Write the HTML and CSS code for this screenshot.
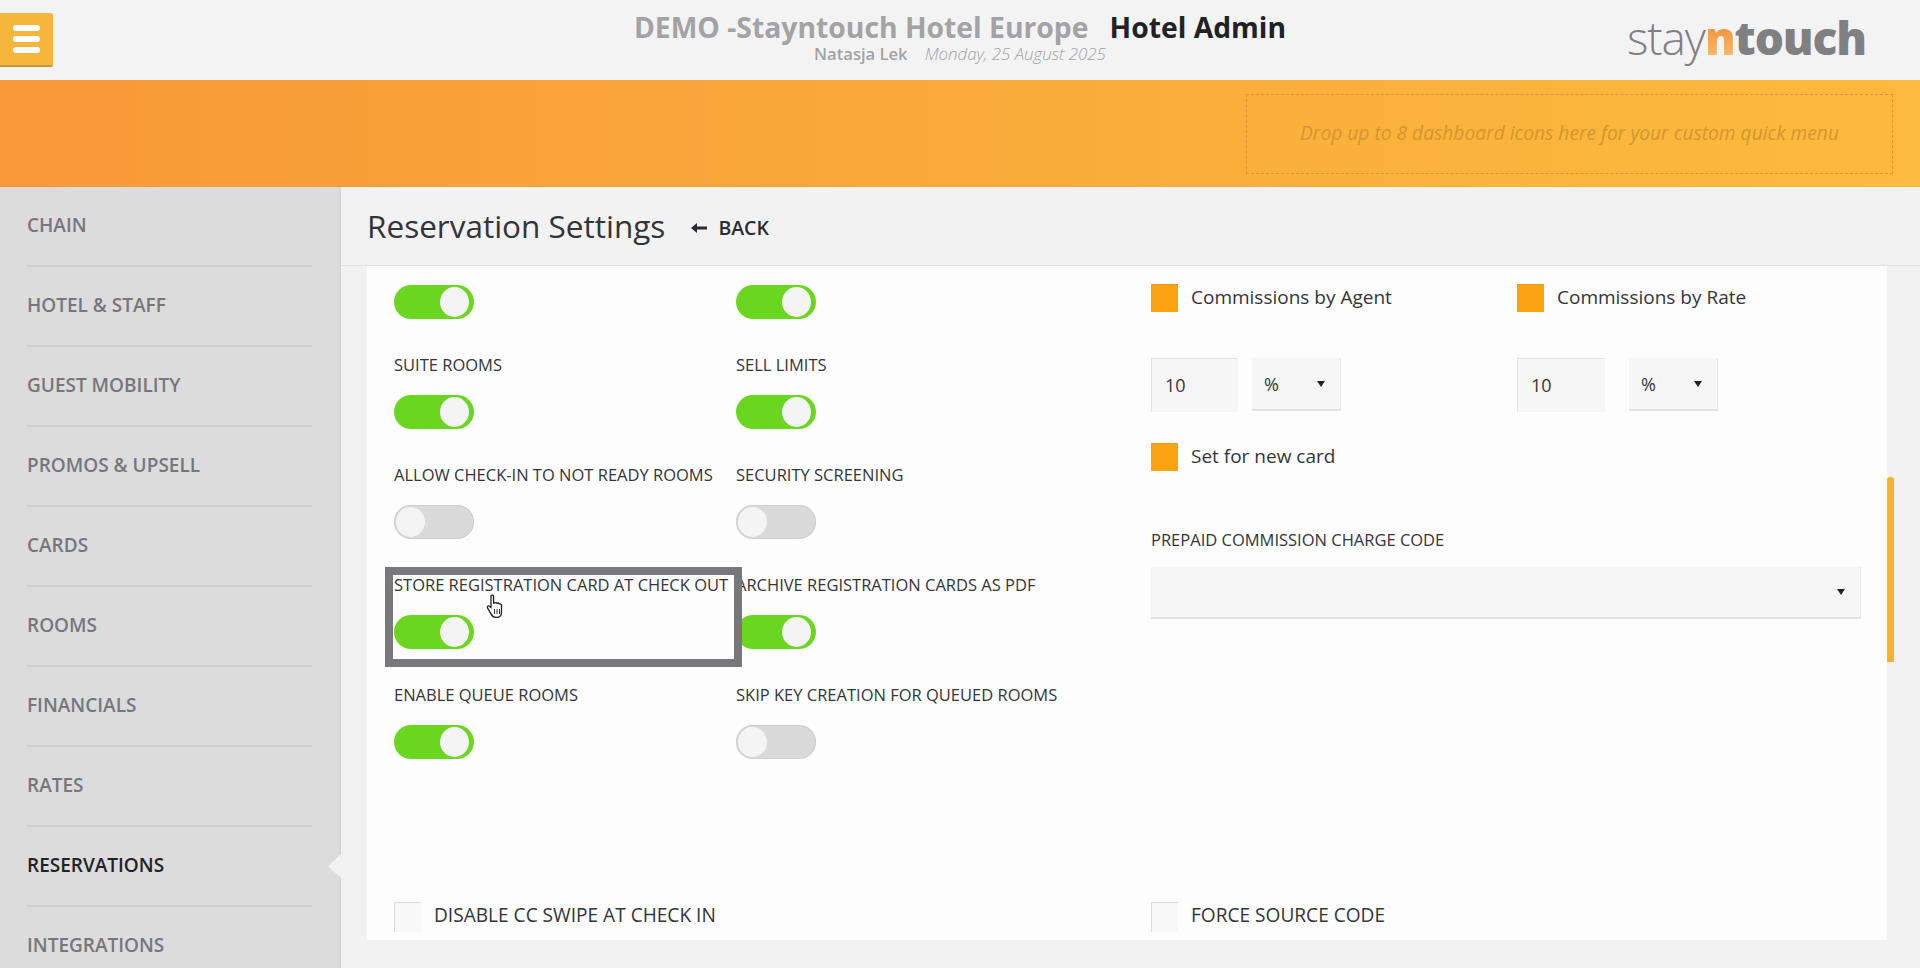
FILE: index.html
```html
<!DOCTYPE html>
<html lang="en">
<head>
<meta charset="utf-8">
<title>Reservation Settings</title>
<link rel="stylesheet" href="styles.css">
</head>
<body>
<header class="topbar">
  <button class="menu-btn" aria-label="Menu"><span></span><span></span><span></span></button>
  <div class="heading">
    <div class="heading-main"><span class="hotel">DEMO -Stayntouch Hotel Europe</span><span class="module">Hotel Admin</span></div>
    <div class="heading-sub"><span class="user">Natasja Lek</span><span class="date">Monday, 25 August 2025</span></div>
  </div>
  <div class="logo"><span class="logo-stay">stay</span><span class="logo-n">n</span><span class="logo-touch">touch</span></div>
</header>
<section class="band">
  <div class="dropzone">Drop up to 8 dashboard icons here for your custom quick menu</div>
</section>
<div class="main">
  <nav class="sidebar">
    <a class="nav-item">CHAIN</a>
    <a class="nav-item">HOTEL &amp; STAFF</a>
    <a class="nav-item">GUEST MOBILITY</a>
    <a class="nav-item">PROMOS &amp; UPSELL</a>
    <a class="nav-item">CARDS</a>
    <a class="nav-item">ROOMS</a>
    <a class="nav-item">FINANCIALS</a>
    <a class="nav-item">RATES</a>
    <a class="nav-item active">RESERVATIONS</a>
    <a class="nav-item">INTEGRATIONS</a>
  </nav>
  <main class="content">
    <div class="titlebar">
      <h1>Reservation Settings</h1>
      <a class="back"><svg class="back-arrow" viewBox="0 0 16 12"><path d="M0 6 6 1v3.400h10v3.200H6V11z"/></svg>BACK</a>
    </div>
    <div class="panel">
      <div class="panel-grid">
        <div class="toggles">
          <div class="cell first"><span class="toggle on"></span></div>
          <div class="cell first"><span class="toggle on"></span></div>
          <div class="cell"><label>SUITE ROOMS</label><span class="toggle on"></span></div>
          <div class="cell"><label>SELL LIMITS</label><span class="toggle on"></span></div>
          <div class="cell"><label>ALLOW CHECK-IN TO NOT READY ROOMS</label><span class="toggle"></span></div>
          <div class="cell"><label>SECURITY SCREENING</label><span class="toggle"></span></div>
          <div class="cell focus-cell"><label>STORE REGISTRATION CARD AT CHECK OUT</label><span class="toggle on"></span><span class="focus-box"></span></div>
          <div class="cell"><label>ARCHIVE REGISTRATION CARDS AS PDF</label><span class="toggle on"></span></div>
          <div class="cell"><label>ENABLE QUEUE ROOMS</label><span class="toggle on"></span></div>
          <div class="cell"><label>SKIP KEY CREATION FOR QUEUED ROOMS</label><span class="toggle"></span></div>
        </div>
        <div class="commissions">
          <div class="comm-row">
            <div class="check-row"><span class="check checked"></span><span class="check-text">Commissions by Agent</span></div>
            <div class="check-row"><span class="check checked"></span><span class="check-text">Commissions by Rate</span></div>
          </div>
          <div class="comm-row inputs">
            <div class="input-pair"><span class="input">10</span><span class="select small">%<i class="caret"></i></span></div>
            <div class="input-pair spaced"><span class="input">10</span><span class="select small">%<i class="caret"></i></span></div>
          </div>
          <div class="check-row single"><span class="check checked"></span><span class="check-text">Set for new card</span></div>
          <label class="prepaid-label">PREPAID COMMISSION CHARGE CODE</label>
          <span class="select wide"><i class="caret"></i></span>
        </div>
      </div>
      <div class="bottom-row">
        <div class="check-row"><span class="check"></span><span class="check-text upper">DISABLE CC SWIPE AT CHECK IN</span></div>
        <div class="check-row"><span class="check"></span><span class="check-text upper">FORCE SOURCE CODE</span></div>
      </div>
      <span class="scroll-thumb"></span>
    </div>
  </main>
</div>
<svg class="cursor" viewBox="0 0 20 26" aria-hidden="true"><path d="M6 2.200c0-1.500 2.600-1.500 2.600 0v7l1-.2c.8-.6 2-.4 2.400.3.8-.4 1.900-.2 2.300.6 1-.3 2.200.3 2.200 1.500v6.500c0 3.500-2 5.500-5 5.500H11c-2.500 0-3.800-1.200-5-3.500l-3.500-6c-.8-1.500 1.200-2.800 2.300-1.300L6 13.500z" fill="#fff" stroke="#222" stroke-width="1.300"/><path d="M9.500 15v5M12 15v5M14.500 15v5" stroke="#333" stroke-width="1"/></svg>
</body>
</html>
```
FILE: styles.css
```css
* { box-sizing: border-box; }
html, body { margin: 0; height: 968px; overflow: hidden; }
body {
  display: flex;
  flex-direction: column;
  position: relative;
  background: #f2f2f3;
  font-family: "Open Sans", "Noto Sans", "Liberation Sans", sans-serif;
  color: #333;
}
.topbar {
  height: 80px;
  flex: none;
  display: flex;
  position: relative;
  justify-content: center;
  background: #f3f3f4;
}
.menu-btn {
  position: absolute;
  left: 0;
  top: 13px;
  width: 53px;
  height: 54px;
  padding: 0 0 0 13px;
  border: 0;
  border-bottom: 2px solid #c79a3c;
  border-radius: 0 2px 2px 0;
  background: #f6b63c;
  display: flex;
  flex-direction: column;
  gap: 5px;
  justify-content: center;
}
.menu-btn span { width: 27px; height: 6px; border-radius: 3px; background: #fff; }
.heading { padding-top: 10px; text-align: center; }
.heading-main { display: flex; gap: 21px; font-size: 28.300px; line-height: 35px; font-weight: 700; }
.hotel { color: #a3a3a5; }
.module { color: #212225; }
.heading-sub { display: flex; justify-content: center; gap: 17px; font-size: 16.600px; line-height: 18px; color: #a3a3a5; }
.user { font-weight: 600; }
.date { font-style: italic; font-weight: 300; font-size: 16.900px; }
.logo {
  position: absolute;
  right: 54px;
  top: 7px;
  font-size: 46px;
  line-height: 60px;
  letter-spacing: -1.100px;
  color: #808083;
}
.logo-stay { font-weight: 300; }
.logo-n {
  font-weight: 800;
  background: linear-gradient(#ee7a1d, #fbc77d);
  -webkit-background-clip: text;
  background-clip: text;
  color: transparent;
}
.logo-touch { font-weight: 800; }
.band {
  height: 107px;
  flex: none;
  display: flex;
  justify-content: flex-end;
  align-items: center;
  padding-right: 27px;
  background: linear-gradient(90deg, #f89937, #fbbb3e);
}
.dropzone {
  width: 647px;
  height: 80px;
  display: flex;
  align-items: center;
  justify-content: center;
  border: 1px dashed #d9982d;
  color: #d5962c;
  font-size: 19.200px;
  font-style: italic;
  padding-bottom: 2px;
}
.main { flex: 1; display: flex; min-height: 0; }
.sidebar {
  width: 341px;
  flex: none;
  padding: 0 27px;
  background: #dcdcdc;
  overflow: hidden;
  box-shadow: inset -2px 0 2px -1px #cfcfcf;
}
.nav-item {
  display: flex;
  align-items: center;
  height: 80px;
  padding-bottom: 3px;
  border-bottom: 2px solid #cfcfcf;
  width: 285px;
  font-size: 19px;
  font-weight: 600;
  color: #77777b;
}
.nav-item.active { position: relative; color: #222326; }
.nav-item.active::after {
  content: "";
  position: absolute;
  right: -29px;
  top: 27px;
  width: 0;
  height: 0;
  border-top: 12px solid transparent;
  border-bottom: 12px solid transparent;
  border-right: 13px solid #f2f2f3;
}
.content { flex: 1; min-width: 0; display: flex; flex-direction: column; padding-bottom: 28px; }
.titlebar {
  height: 79px;
  flex: none;
  display: flex;
  align-items: center;
  padding-left: 26px;
  border-bottom: 1px solid #e2e2e2;
}
h1 { margin: 0 0 2px; font-size: 31.500px; font-weight: 400; color: #333539; }
.back { display: flex; align-items: center; margin-left: 26px; font-size: 19.500px; font-weight: 600; color: #2b2c30; padding-top: 3px; }
.back-arrow { width: 16px; height: 12px; margin-right: 11px; fill: #2b2c30; }
.panel {
  position: relative;
  flex: 1;
  min-height: 0;
  margin: 0 33px 0 26px;
  padding-left: 27px;
  background: #fdfdfd;
}
.panel-grid { display: flex; }
.toggles { width: 757px; flex: none; display: grid; grid-template-columns: 342px 415px; }
.cell { height: 110px; padding-top: 1px; display: flex; flex-direction: column; align-items: flex-start; position: relative; }
.cell.first { height: 86px; padding-top: 19px; }
.cell label { height: 24px; line-height: 24px; margin-bottom: 18px; font-size: 16.500px; color: #343539; white-space: nowrap; }
.toggle {
  width: 80px;
  height: 34px;
  border-radius: 17px;
  background: #dadada;
  position: relative;
  flex: none;
  box-shadow: inset 0 0 0 1px #cfcfcf;
}
.toggle::after {
  content: "";
  position: absolute;
  left: 2px;
  top: 2px;
  width: 29px;
  height: 30px;
  border-radius: 50%;
  background: #f4f4f4;
}
.toggle.on { background: #6ad61f; box-shadow: none; }
.toggle.on::after { left: auto; right: 5px; }
.focus-box {
  position: absolute;
  left: -9px;
  top: -5px;
  width: 357px;
  height: 100px;
  border: 8px solid #78787b;
  pointer-events: none;
}
.focus-cell { z-index: 1; }
.commissions { padding-top: 18px; }
.comm-row { display: flex; }
.comm-row > * { width: 366px; }
.check-row { display: flex; align-items: center; gap: 13px; height: 28px; }
.check { width: 27px; height: 28px; flex: none; background: #f8f8f8; border-top: 1px solid #dedede; border-left: 1px solid #dedede; }
.check.checked { background: #fca311; border-color: #e8991a; border-width: 1px 0 0 0; }
.check-text { font-size: 19px; color: #343539; white-space: nowrap; padding-bottom: 2px; }
.check-text.upper { font-size: 19.100px; }
.inputs { margin-top: 46px; }
.input-pair { display: flex; gap: 14px; }
.input-pair.spaced { gap: 24px; }
.input {
  width: 87px;
  height: 54px;
  display: flex;
  align-items: center;
  padding: 0 0 2px 13px;
  background: #f6f6f6;
  border-top: 1px solid #e4e4e4;
  border-left: 1px solid #e4e4e4;
  font-size: 18px;
  color: #35363a;
}
.spaced .input { width: 88px; }
.select {
  position: relative;
  display: flex;
  align-items: center;
  background: #f6f6f6;
  border-bottom: 2px solid #e2e2e2;
  border-right: 1px solid #e8e8e8;
  font-size: 18px;
  color: #35363a;
}
.select.small { width: 89px; height: 53px; padding-left: 12px; }
.select.wide { width: 710px; height: 52px; margin-top: 15px; }
.caret {
  position: absolute;
  right: 15px;
  top: 50%;
  margin-top: -3px;
  border-left: 4px solid transparent;
  border-right: 4px solid transparent;
  border-top: 6px solid #222;
}
.single { margin-top: 31px; }
.prepaid-label { display: block; margin-top: 57px; line-height: 24px; font-size: 16.500px; color: #343539; }
.bottom-row { display: flex; margin-top: 110px; }
.bottom-row > :first-child { width: 757px; flex: none; }
.bottom-row .check { height: 30px; margin-top: 2px; }
.scroll-thumb {
  position: absolute;
  right: -7px;
  top: 211px;
  width: 7px;
  height: 185px;
  border-radius: 3px 3px 0 0;
  background: #f8b427;
}
.cursor { position: absolute; left: 485px; top: 594px; width: 20px; height: 26px; z-index: 2; }
```
